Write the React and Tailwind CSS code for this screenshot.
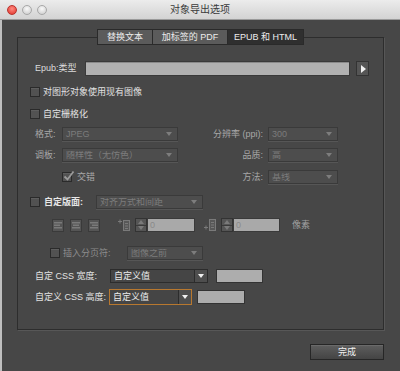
import React from "react";

function Checkbox({ checked = false, className = "" }) {
  return (
    <div className={"relative w-[10px] h-[10px] shrink-0 border border-[#2a2a2a] bg-[#525252] shadow-[inset_0_1px_0_#5e5e5e] " + className}>
      {checked && (
        <svg className="absolute -top-[3px] left-[0px]" width="12" height="12" viewBox="0 0 12 12">
          <path d="M1.5 6.5 L4.5 9.5 L10.5 1.5" fill="none" stroke="#9a9a9a" strokeWidth="1.8" />
        </svg>
      )}
    </div>
  );
}

function Select({ text, className = "", disabled = true, active = false }) {
  if (disabled) {
    return (
      <div className={"flex items-center h-[14px] border border-[#3a3a3a] bg-[#4d4d4d] shadow-[0_1px_0_#565656] " + className}>
        <span className="flex-1 pl-[3px] text-[#7c7c7c] leading-none whitespace-nowrap overflow-hidden">{text}</span>
        <svg width="10" height="6" viewBox="0 0 10 6" className="mr-[3px] shrink-0">
          <path d="M2 1 L8 1 L5 5 Z" fill="#7d7d7d" />
        </svg>
      </div>
    );
  }
  return (
    <div className={"flex items-center border bg-[#454545] " + (active ? "h-[16px] border-[#b8782f]" : "h-[14px] border-[#2c2c2c]") + " " + className}>
      <span className="flex-1 pl-[3px] text-[#ececec] leading-none whitespace-nowrap">{text}</span>
      <div className="h-full w-[13px] flex items-center justify-center border-l border-[#2c2c2c] bg-[#4e4e4e]">
        <svg width="8" height="6" viewBox="0 0 8 6">
          <path d="M1 1 L7 1 L4 5 Z" fill="#f0f0f0" />
        </svg>
      </div>
    </div>
  );
}

function Spinner({ className = "" }) {
  return (
    <div className={"flex flex-col h-[14px] border border-[#333] bg-[#555] " + className}>
      <div className="flex-1 flex items-center justify-center border-b border-[#3a3a3a]">
        <svg width="6" height="4" viewBox="0 0 6 4"><path d="M0 4 L3 0 L6 4 Z" fill="#7a7a7a" /></svg>
      </div>
      <div className="flex-1 flex items-center justify-center">
        <svg width="6" height="4" viewBox="0 0 6 4"><path d="M0 0 L6 0 L3 4 Z" fill="#7a7a7a" /></svg>
      </div>
    </div>
  );
}

function AlignIcon({ kind }) {
  const lines =
    kind === "l"
      ? [[2, 3, 7], [2, 5.5, 5], [2, 8, 7]]
      : kind === "c"
      ? [[2, 3, 7], [3, 5.5, 5], [2, 8, 7]]
      : [[2, 3, 7], [4, 5.5, 5], [2, 8, 7]];
  return (
    <svg width="12" height="13" viewBox="0 0 12 13">
      <rect x="0.5" y="0.5" width="11" height="12" fill="#555" stroke="#3a3a3a" />
      {lines.map(([x, y, w], i) => (
        <rect key={i} x={x} y={y} width={w + 1} height="1.5" fill="#7a7a7a" />
      ))}
    </svg>
  );
}

function SpaceIcon({ flip = false }) {
  return (
    <svg width="14" height="14" viewBox="0 0 14 14">
      {flip ? (
        <>
          <rect x="1" y="9" width="4" height="1" fill="#7a7a7a" />
          <rect x="2.5" y="7.5" width="1" height="4" fill="#7a7a7a" />
          <rect x="6.5" y="1.5" width="6" height="11" fill="#585858" stroke="#7a7a7a" />
          <rect x="8" y="4" width="3" height="1" fill="#7a7a7a" />
          <rect x="8" y="6.5" width="3" height="1" fill="#7a7a7a" />
          <rect x="8" y="9" width="3" height="1" fill="#7a7a7a" />
        </>
      ) : (
        <>
          <rect x="0" y="3" width="4" height="1" fill="#7a7a7a" />
          <rect x="1.5" y="1.5" width="1" height="4" fill="#7a7a7a" />
          <rect x="5.5" y="2.5" width="6" height="10" fill="#585858" stroke="#7a7a7a" />
          <rect x="7" y="5" width="3" height="1" fill="#7a7a7a" />
          <rect x="7" y="7.5" width="3" height="1" fill="#7a7a7a" />
          <rect x="7" y="10" width="3" height="1" fill="#7a7a7a" />
        </>
      )}
    </svg>
  );
}

export default function App() {
  return (
    <div className="w-[400px] h-[371px] flex flex-col overflow-hidden bg-[#474747] text-[9px] leading-none font-[Liberation_Sans,Noto_Sans_CJK_SC,sans-serif]">
      {/* title bar */}
      <div className="relative h-[20px] shrink-0 flex items-center bg-gradient-to-b from-[#ececec] to-[#d3d3d3] border-b border-[#9a9a9a]">
        <div className="flex items-center gap-[5px] pl-[7px]">
          <div className="w-[10px] h-[10px] rounded-full bg-[radial-gradient(circle_at_50%_35%,#ff8a80,#e0322a)] border border-[#b8322c]" />
          <div className="w-[10px] h-[10px] rounded-full bg-[radial-gradient(circle_at_50%_35%,#fafafa,#c8c8c8)] border border-[#a8a8a8]" />
          <div className="w-[10px] h-[10px] rounded-full bg-[radial-gradient(circle_at_50%_35%,#fafafa,#c8c8c8)] border border-[#a8a8a8]" />
        </div>
        <div className="absolute inset-0 flex items-center justify-center text-[10px] text-[#3a3a3a] pointer-events-none">
          对象导出选项
        </div>
      </div>

      {/* body */}
      <div className="flex-1 flex flex-col border-l-2 border-[#bfbfbf] pl-[15px] pr-[16px]">
        {/* group box */}
        <div className="mt-[17px] h-[293px] border border-[#2d2d2d] shadow-[1px_1px_0_#575757] flex flex-col">
          {/* tabs */}
          <div className="-mt-[9px] flex justify-center">
            <div className="flex h-[16px] border border-[#2a2a2a] text-[#ececec]">
              <div className="w-[55px] flex items-center justify-center bg-[#5b5b5b] border-r border-[#2a2a2a]">替换文本</div>
              <div className="w-[75px] flex items-center justify-center bg-[#5b5b5b] border-r border-[#2a2a2a]">加标签的 PDF</div>
              <div className="w-[75px] flex items-center justify-center bg-[#2f2f2f]">EPUB 和 HTML</div>
            </div>
          </div>

          <div className="flex flex-col pl-[12px]">
            {/* epub row */}
            <div className="mt-[16px] h-[15px] flex items-center">
              <span className="ml-[5px] w-[50px] text-[#dcdcdc]">Epub:类型</span>
              <div className="w-[265px] h-[15px] bg-[#b1b1b1] border border-[#3a3a3a] shadow-[inset_0_1px_0_#8a8a8a]" />
              <div className="ml-[6px] w-[13px] h-[15px] flex items-center justify-center bg-[#555] border border-[#333]">
                <svg width="6" height="8" viewBox="0 0 6 8"><path d="M1 0 L6 4 L1 8 Z" fill="#f0f0f0" /></svg>
              </div>
            </div>

            {/* checkbox 1 */}
            <div className="mt-[9px] h-[14px] flex items-center gap-[3px]">
              <Checkbox />
              <span className="text-[#e2e2e2]">对图形对象使用现有图像</span>
            </div>

            {/* checkbox 2 */}
            <div className="mt-[8px] h-[14px] flex items-center gap-[3px]">
              <Checkbox />
              <span className="text-[#e2e2e2]">自定栅格化</span>
            </div>

            {/* 格式 */}
            <div className="mt-[6px] h-[14px] flex items-center">
              <div className="w-[148px] flex items-center">
                <span className="ml-[5px] w-[27px] text-[#a8a8a8]">格式:</span>
                <Select text="JPEG" className="w-[116px]" />
              </div>
              <span className="w-[85px] text-right text-[#a8a8a8]">分辨率 (ppi):</span>
              <Select text="300" className="ml-[5px] w-[70px]" />
            </div>

            {/* 调板 */}
            <div className="mt-[7px] h-[14px] flex items-center">
              <div className="w-[148px] flex items-center">
                <span className="ml-[5px] w-[27px] text-[#a8a8a8]">调板:</span>
                <Select text="随样性（无仿色）" className="w-[116px]" />
              </div>
              <span className="w-[85px] text-right text-[#a8a8a8]">品质:</span>
              <Select text="高" className="ml-[5px] w-[70px]" />
            </div>

            {/* 交错 */}
            <div className="mt-[8px] h-[14px] flex items-center">
              <div className="w-[148px] flex items-center">
                <Checkbox checked className="ml-[32px]" />
                <span className="ml-[5px] text-[#a8a8a8]">交错</span>
              </div>
              <span className="w-[85px] text-right text-[#a8a8a8]">方法:</span>
              <Select text="基线" className="ml-[5px] w-[70px]" />
            </div>

            {/* 自定版面 */}
            <div className="mt-[11px] h-[14px] flex items-center">
              <Checkbox />
              <span className="ml-[4px] w-[52px] font-bold text-[#e6e6e6]">自定版面:</span>
              <Select text="对齐方式和间距" className="w-[107px]" />
            </div>

            {/* icons row */}
            <div className="mt-[9px] h-[14px] flex items-center">
              <div className="ml-[22px] flex items-center gap-[6px]">
                <AlignIcon kind="l" />
                <AlignIcon kind="c" />
                <AlignIcon kind="r" />
              </div>
              <div className="ml-[18px]"><SpaceIcon /></div>
              <Spinner className="ml-[3px] w-[12px]" />
              <div className="w-[48px] h-[14px] bg-[#a9a9a9] border border-[#3a3a3a] flex items-center pl-[2px] text-[#8a8a8a]">0</div>
              <div className="ml-[8px]"><SpaceIcon flip /></div>
              <Spinner className="ml-[4px] w-[12px]" />
              <div className="w-[47px] h-[14px] bg-[#a9a9a9] border border-[#3a3a3a] flex items-center pl-[2px] text-[#8a8a8a]">0</div>
              <span className="ml-[12px] text-[#a0a0a0]">像素</span>
            </div>

            {/* 插入分页符 */}
            <div className="mt-[14px] h-[14px] flex items-center">
              <Checkbox className="ml-[20px]" />
              <span className="ml-[3px] w-[64px] text-[#8c8c8c]">插入分页符:</span>
              <Select text="图像之前" className="w-[76px]" />
            </div>

            {/* CSS 宽度 */}
            <div className="mt-[9px] h-[14px] flex items-center">
              <span className="ml-[5px] w-[75px] text-[#e2e2e2]">自定 CSS 宽度:</span>
              <Select disabled={false} text="自定义值" className="w-[98px]" />
              <div className="ml-[8px] w-[47px] h-[14px] bg-[#adadad] border border-[#333]" />
            </div>

            {/* CSS 高度 */}
            <div className="mt-[6px] h-[16px] flex items-center">
              <span className="ml-[5px] w-[74px] text-[#e2e2e2]">自定义 CSS 高度:</span>
              <Select disabled={false} active text="自定义值" className="w-[83px]" />
              <div className="ml-[5px] w-[48px] h-[14px] bg-[#adadad] border border-[#333]" />
            </div>
          </div>
        </div>

        {/* bottom button */}
        <div className="mt-[14px] flex justify-end">
          <div className="w-[74px] h-[16px] flex items-center justify-center border border-[#262626] bg-gradient-to-b from-[#5e5e5e] to-[#444] text-[#f0f0f0] shadow-[inset_0_1px_0_#6a6a6a]">
            完成
          </div>
        </div>
      </div>
    </div>
  );
}
